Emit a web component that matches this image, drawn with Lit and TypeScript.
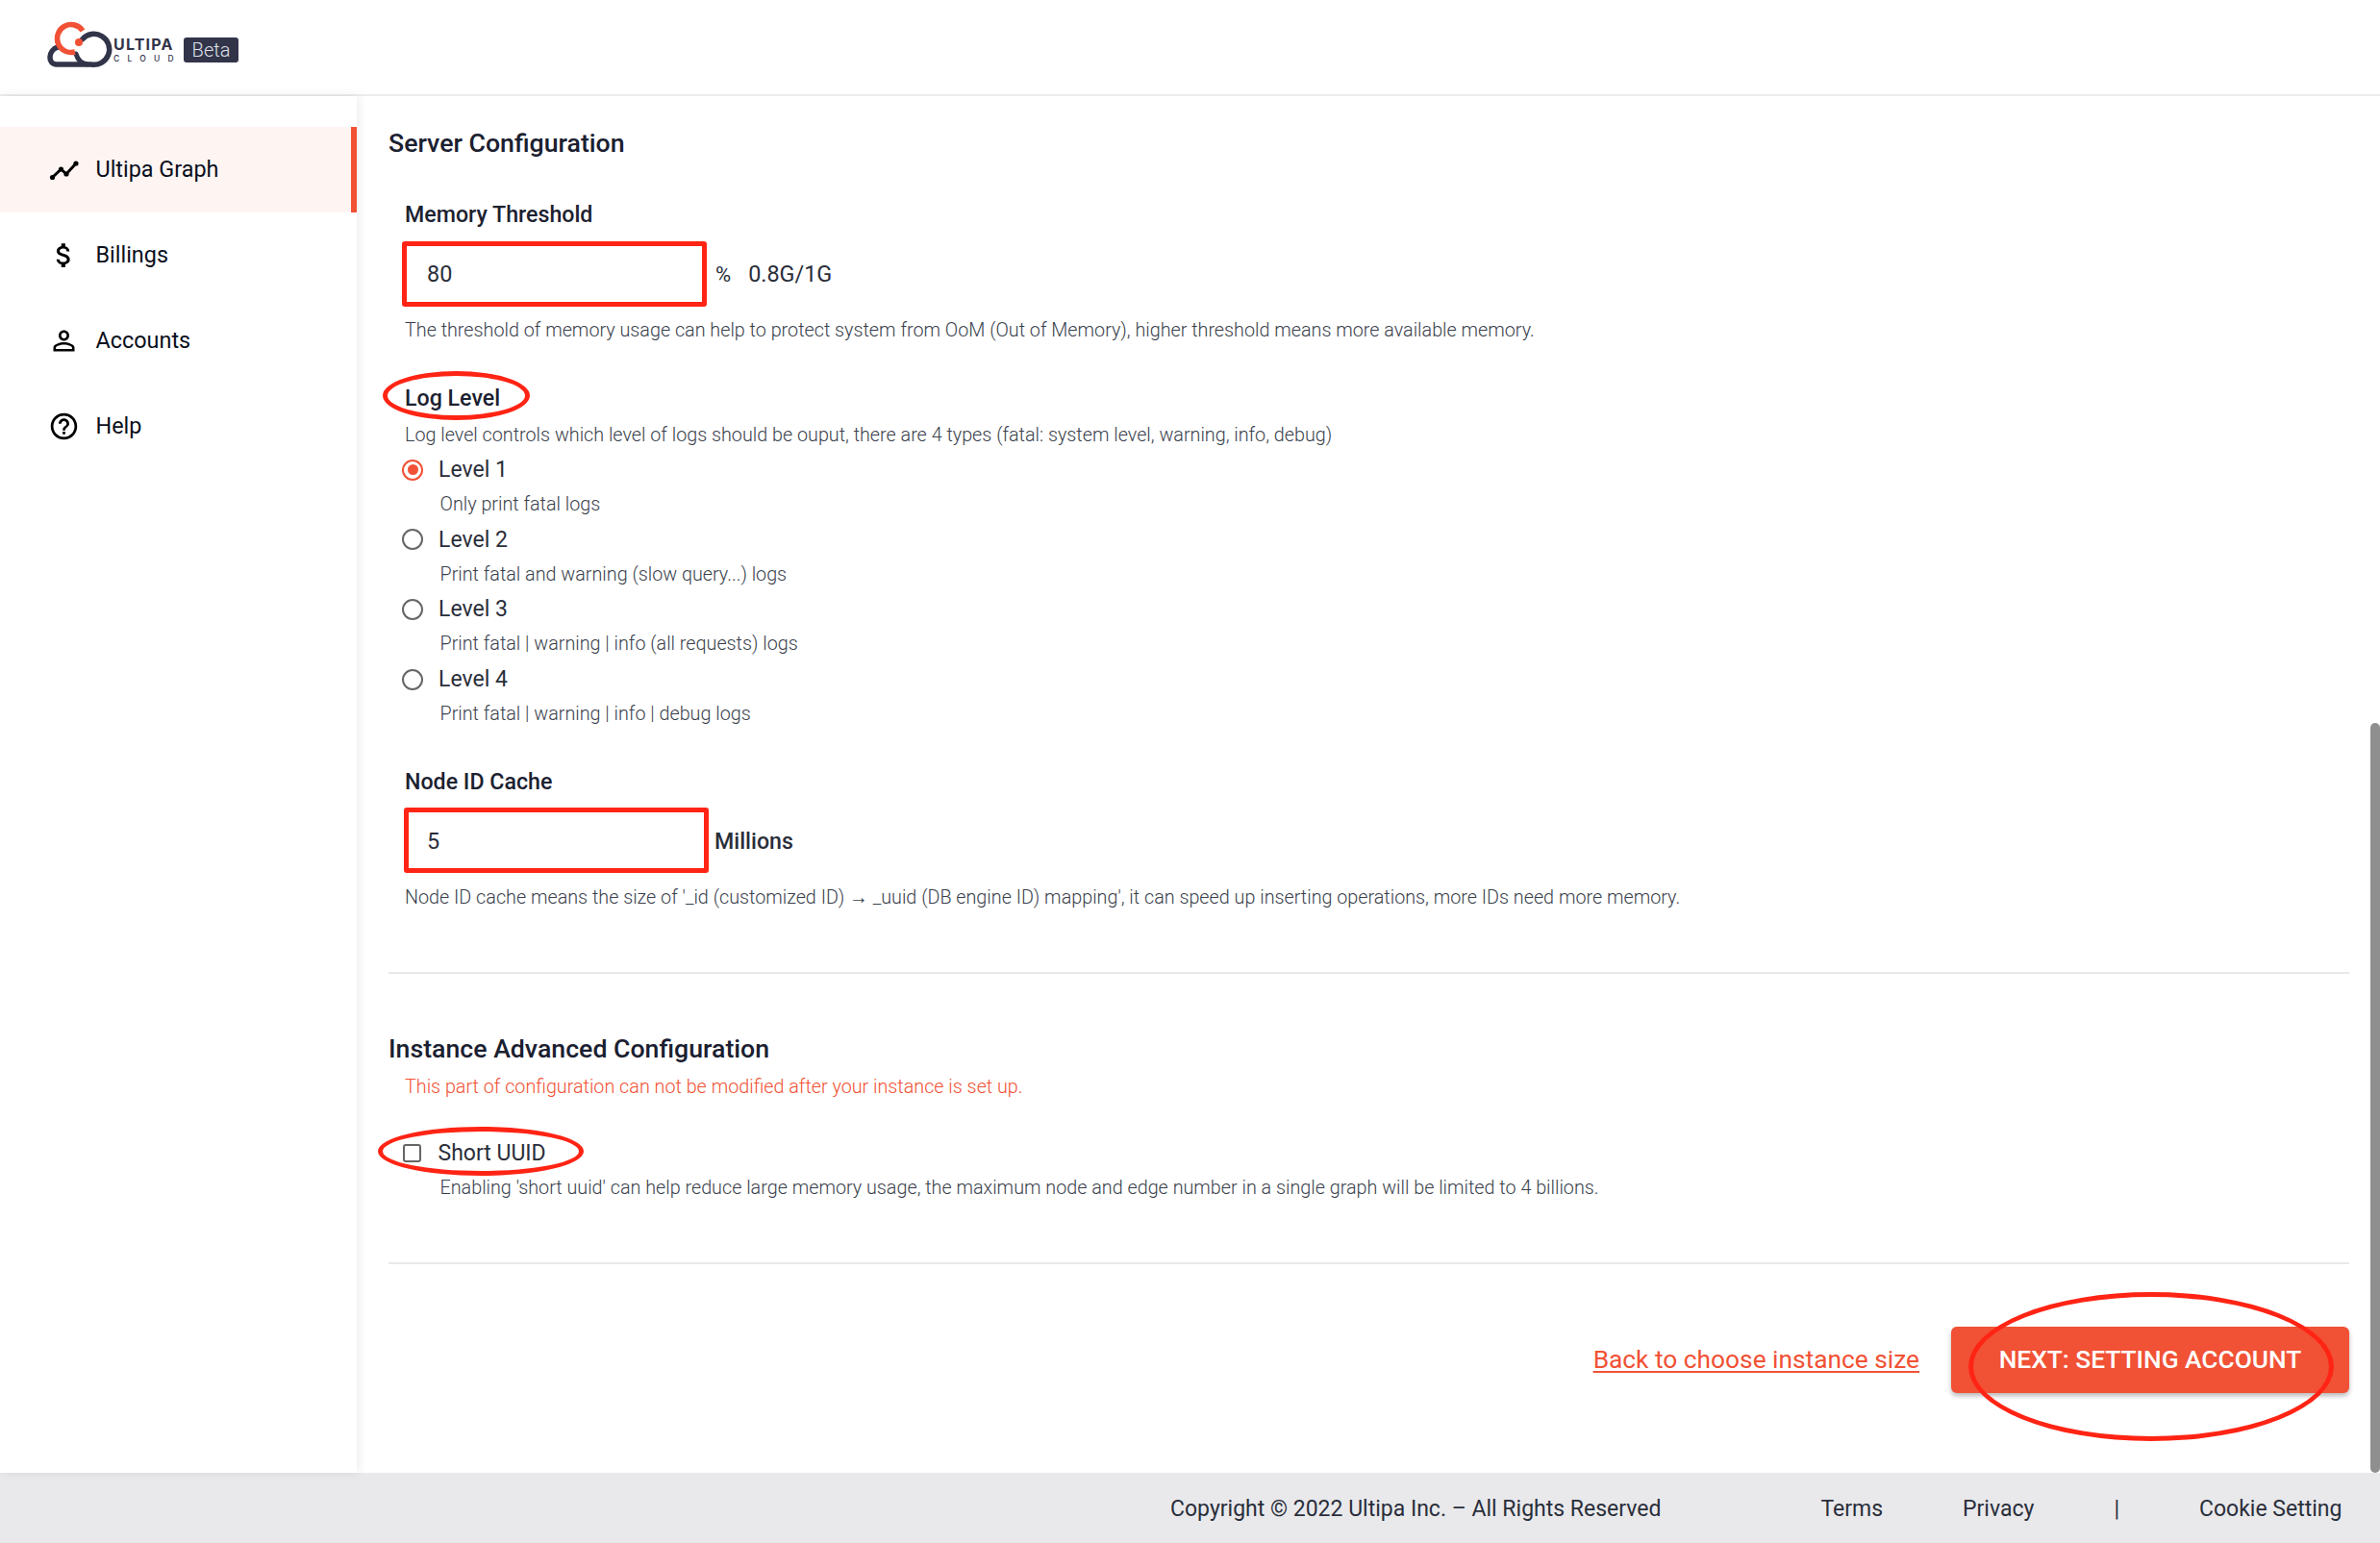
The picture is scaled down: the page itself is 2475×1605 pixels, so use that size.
import { LitElement, html, css } from "lit";
import { customElement } from "lit/decorators.js";

const levels = [
  ["Level 1", "Only print fatal logs", true],
  ["Level 2", "Print fatal and warning (slow query...) logs", false],
  ["Level 3", "Print fatal | warning | info (all requests) logs", false],
  ["Level 4", "Print fatal | warning | info | debug logs", false],
] as const;

@customElement("app-root")
export class AppRoot extends LitElement {
  static styles = css`
    :host { display: block; width: 2475px; height: 1605px; position: relative; overflow: hidden; background: #fff; font-family: Roboto, "Liberation Sans", sans-serif; color: #1c2130; }
    * { box-sizing: border-box; }
    .page { display: flex; flex-direction: column; height: 1605px; }
    .top { height: 100px; flex: none; border-bottom: 2px solid #ececec; display: flex; align-items: flex-start; padding-left: 45px; padding-top: 18px; }
    .logo { width: 75px; height: 56px; flex: none; display: block; }
    .brand { display: flex; flex-direction: column; margin-left: -2px; width: 68px; margin-top: 21px; }
    .ultipa { font: 700 16px/15px Inter, Roboto, sans-serif; color: #32344a; letter-spacing: 1.2px; }
    .cloud { font: 500 8.5px/10px Inter, Roboto, sans-serif; color: #32344a; letter-spacing: 8.2px; margin-top: 2px; white-space: nowrap; }
    .beta { margin-left: 5px; width: 57px; height: 26px; background: #32344a; border-radius: 3px; color: #dfe0e8; font: 300 20px/26px Roboto, sans-serif; text-align: center; margin-top: 21px; }
    .mid { flex: 1; display: flex; min-height: 0; position: relative; }
    .side { width: 371px; flex: none; padding-top: 32px; background: #fff; box-shadow: 2px 0 10px rgba(0,0,0,.08); position: relative; }
    .item { height: 89px; display: flex; align-items: center; padding-left: 50px; padding-bottom: 1px; font-size: 23.4px; color: #0b0f1c; }
    .item.active { background: #fef5f3; border-right: 6px solid #f15135; }
    .item svg { width: 33px; height: 33px; flex: none; margin-right: 16.5px; display: block; }
    .main { flex: 1; min-width: 0; padding: 33px 32px 0 33px; }
    h2 { font-size: 26.7px; line-height: 32px; font-weight: 500; margin: 0; color: #1a2030; }
    .field { padding-left: 17px; }
    .label { font-size: 23.2px; line-height: 30px; font-weight: 500; color: #1c2130; }
    .mem { margin-top: 43px; }
    .rowi { display: flex; align-items: center; }
    .input { width: 317px; height: 68px; border: 5px solid #ff2414; border-radius: 3px; font-size: 23.4px; line-height: 58px; padding-left: 21px; color: #2a2e3a; flex: none; }
    .i1 { margin: 13px 0 0 -3px; }
    .i2 { margin: 12px 0 0 -1px; line-height: 60px; padding-left: 19px; }
    .help { font-size: 19.75px; line-height: 26px; padding-top: 1px; margin-bottom: -1px; font-weight: 300; color: #3a3f4c; white-space: nowrap; }
    .mt { margin-top: 12px; }
    .h1 { margin-top: 11px; }
    .pct { font-size: 22px; color: #2a2e3a; margin: 13px 0 0 9px; }
    .unit { font-size: 23.4px; color: #2a2e3a; margin: 13px 0 0 18px; }
    .mill { font-size: 23.2px; font-weight: 500; color: #2a2e3a; margin: 14px 0 0 6px; }
    .loglabel { margin-top: 43px; }
    .h2b { margin-top: 10px; }
    .opts { margin-top: 5px; }
    .opt { height: 36px; display: flex; align-items: center; padding-top: 1px; }
    .radio { width: 22px; height: 22px; border-radius: 50%; border: 2.5px solid #666; flex: none; margin-right: 16px; margin-left: -3px; display: flex; align-items: center; justify-content: center; }
    .radio.on { border-color: #f15135; }
    .radio.on::after { content: ""; width: 11px; height: 11px; border-radius: 50%; background: #f15135; }
    .optl { font-size: 23px; color: #2a2e3a; }
    .sub { padding-left: 36.5px; height: 36.7px; line-height: 36px; margin-bottom: 0; }
    .nodelabel { margin-top: 37px; }
    hr { border: 0; border-top: 2px solid #e9e9e9; margin: 65px 0 0; }
    .adv { margin-top: 62px; }
    .warn { color: #f15135; margin-top: 10px; }
    .short { margin-top: 38px; }
    .check { width: 19px; height: 19px; border: 2.5px solid #666; border-radius: 3px; flex: none; margin-right: 17.5px; margin-left: -2px; }
    .shelp { padding-left: 36.5px; margin-top: 5px; }
    .actions { display: flex; justify-content: flex-end; align-items: center; height: 69px; margin-top: 65px; }
    .back { font-size: 26.3px; color: #f15135; text-decoration: underline; text-underline-offset: 3px; margin-right: 33px; white-space: nowrap; }
    .next { width: 414px; height: 69px; background: #f15135; border-radius: 6px; color: #fff; font-size: 26.3px; font-weight: 500; display: flex; align-items: center; justify-content: center; box-shadow: 0 3px 5px rgba(0,0,0,.28); white-space: nowrap; }
    .foot { height: 73px; flex: none; background: #e9e9ec; display: flex; align-items: center; font-size: 23px; color: #2a2e3a; padding: 2px 0 0 1217px; }
    .foot span { white-space: nowrap; }
    .f1 { margin-left: 166px; }
    .f2 { margin-left: 83px; }
    .f3 { margin-left: 83px; }
    .f4 { margin-left: 83px; }
    .thumb { position: absolute; right: 0; top: 652px; bottom: 0; width: 10px; background: #8f8f8f; border-radius: 5px; }
    .mark { position: absolute; border: 5px solid #ff2414; border-radius: 50%; pointer-events: none; }
    .m1 { left: 398px; top: 386px; width: 153px; height: 51px; }
    .m2 { left: 393px; top: 1172px; width: 214px; height: 51px; }
    .m3 { left: 2047px; top: 1344px; width: 380px; height: 155px; }
  `;

  render() {
    return html`
      <div class="page">
        <div class="top">
          <svg class="logo" viewBox="0 0 75 56" fill="none">
            <path d="M40.5 23 A16 16 0 1 1 49.5 49 L14 49 C4 49 5 34 15 31" stroke="#32344a" stroke-width="5.5" stroke-linecap="round"/>
            <path d="M34 38 Q37 48 46 49" stroke="#32344a" stroke-width="5" stroke-linecap="round"/>
            <path d="M41 14 A14.5 14.5 0 1 0 33 36" stroke="#f15135" stroke-width="5.5"/>
            <circle cx="37" cy="26" r="4" fill="#f15135"/>
          </svg>
          <div class="brand"><div class="ultipa">ULTIPA</div><div class="cloud">CLOUD</div></div>
          <div class="beta">Beta</div>
        </div>
        <div class="mid">
          <div class="side">
            <div class="item active">
              <svg viewBox="0 0 33 33" fill="none"><path d="M5 24 L13.5 16 L19 21 L29 10" stroke="#000" stroke-width="3"/><circle cx="4.5" cy="24.5" r="2.6" fill="#000"/><circle cx="13.5" cy="16" r="2.6" fill="#000"/><circle cx="19" cy="21" r="2.6" fill="#000"/><circle cx="29" cy="10" r="2.6" fill="#000"/></svg>
              Ultipa Graph
            </div>
            <div class="item">
              <svg viewBox="0 0 24 24"><path fill="#000" d="M11.8 10.9c-2.27-.59-3-1.2-3-2.15 0-1.09 1.01-1.85 2.7-1.85 1.78 0 2.44.85 2.5 2.1h2.21c-.07-1.72-1.12-3.3-3.21-3.81V3h-3v2.16c-1.94.42-3.5 1.68-3.5 3.61 0 2.31 1.91 3.46 4.7 4.13 2.5.6 3 1.48 3 2.41 0 .69-.49 1.79-2.7 1.79-2.06 0-2.87-.92-2.98-2.1h-2.2c.12 2.19 1.76 3.42 3.68 3.83V21h3v-2.15c1.95-.37 3.5-1.5 3.5-3.55 0-2.84-2.43-3.81-4.7-4.4z"/></svg>
              Billings
            </div>
            <div class="item">
              <svg viewBox="0 0 24 24"><path fill="#000" d="M12 5.9c1.16 0 2.1.94 2.1 2.1s-.94 2.1-2.1 2.1S9.9 9.16 9.9 8s.94-2.1 2.1-2.1m0 9c2.97 0 6.1 1.46 6.1 2.1v1.1H5.9V17c0-.64 3.13-2.1 6.1-2.1M12 4C9.79 4 8 5.79 8 8s1.79 4 4 4 4-1.79 4-4-1.79-4-4-4zm0 9c-2.67 0-8 1.34-8 4v3h16v-3c0-2.66-5.33-4-8-4z"/></svg>
              Accounts
            </div>
            <div class="item">
              <svg viewBox="0 0 24 24"><path fill="#000" d="M11 18h2v-2h-2v2zm1-16C6.48 2 2 6.48 2 12s4.48 10 10 10 10-4.48 10-10S17.52 2 12 2zm0 18c-4.41 0-8-3.59-8-8s3.59-8 8-8 8 3.59 8 8-3.59 8-8 8zm0-14c-2.21 0-4 1.79-4 4h2c0-1.1.9-2 2-2s2 .9 2 2c0 2-3 1.75-3 5h2c0-2.25 3-2.5 3-5 0-2.21-1.79-4-4-4z"/></svg>
              Help
            </div>
          </div>
          <div class="main">
            <h2>Server Configuration</h2>
            <div class="field">
              <div class="label mem">Memory Threshold</div>
              <div class="rowi">
                <div class="input i1">80</div>
                <span class="pct">%</span>
                <span class="unit">0.8G/1G</span>
              </div>
              <div class="help h1">The threshold of memory usage can help to protect system from OoM (Out of Memory), higher threshold means more available memory.</div>
              <div class="label loglabel">Log Level</div>
              <div class="help h2b">Log level controls which level of logs should be ouput, there are 4 types (fatal: system level, warning, info, debug)</div>
              <div class="opts">
                ${levels.map(
                  ([l, d, on]) => html`
                    <div class="opt"><span class="radio ${on ? "on" : ""}"></span><span class="optl">${l}</span></div>
                    <div class="help sub">${d}</div>
                  `
                )}
              </div>
              <div class="label nodelabel">Node ID Cache</div>
              <div class="rowi">
                <div class="input i2">5</div>
                <span class="mill">Millions</span>
              </div>
              <div class="help mt">Node ID cache means the size of '_id (customized ID) → _uuid (DB engine ID) mapping', it can speed up inserting operations, more IDs need more memory.</div>
            </div>
            <hr />
            <h2 class="adv">Instance Advanced Configuration</h2>
            <div class="field">
              <div class="help warn">This part of configuration can not be modified after your instance is set up.</div>
              <div class="opt short"><span class="check"></span><span class="optl">Short UUID</span></div>
              <div class="help shelp">Enabling 'short uuid' can help reduce large memory usage, the maximum node and edge number in a single graph will be limited to 4 billions.</div>
            </div>
            <hr />
            <div class="actions">
              <span class="back">Back to choose instance size</span>
              <div class="next">NEXT: SETTING ACCOUNT</div>
            </div>
          </div>
          <div class="thumb"></div>
        </div>
        <div class="foot">
          <span>Copyright © 2022 Ultipa Inc. – All Rights Reserved</span>
          <span class="f1">Terms</span>
          <span class="f2">Privacy</span>
          <span class="f3">|</span>
          <span class="f4">Cookie Setting</span>
        </div>
      </div>
      <div class="mark m1"></div>
      <div class="mark m2"></div>
      <div class="mark m3"></div>
    `;
  }
}
